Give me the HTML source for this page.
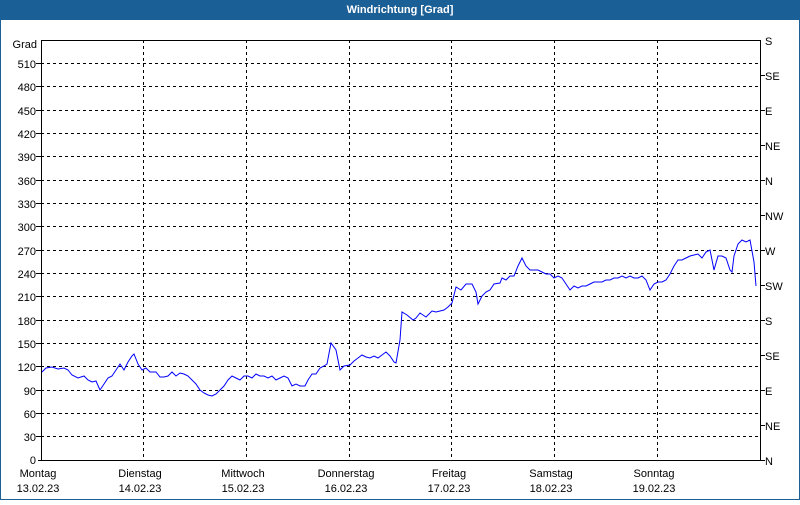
<!DOCTYPE html>
<html><head><meta charset="utf-8"><style>
html,body{margin:0;padding:0;background:#fff}
body{width:800px;height:500px;position:relative;overflow:hidden;font-family:"Liberation Sans",sans-serif;}
</style></head><body>
<svg width="800" height="500" xmlns="http://www.w3.org/2000/svg" font-family="Liberation Sans, sans-serif" font-size="11">
<rect x="0" y="0" width="800" height="500" fill="#fff"/>
<rect x="0" y="0" width="800" height="20" fill="#1b5f97"/>
<rect x="0" y="0" width="1" height="500" fill="#1b5f97"/>
<rect x="799" y="0" width="1" height="500" fill="#1b5f97"/>
<rect x="0" y="499" width="800" height="1" fill="#1b5f97"/>
<text x="400" y="13" fill="#fff" font-weight="bold" text-anchor="middle" font-size="11">Windrichtung [Grad]</text>
<g stroke="#000" stroke-width="1" stroke-dasharray="3,3" shape-rendering="crispEdges">
<line x1="41" x2="760" y1="63.5" y2="63.5"/><line x1="41" x2="760" y1="86.5" y2="86.5"/><line x1="41" x2="760" y1="110.5" y2="110.5"/><line x1="41" x2="760" y1="133.5" y2="133.5"/><line x1="41" x2="760" y1="156.5" y2="156.5"/><line x1="41" x2="760" y1="180.5" y2="180.5"/><line x1="41" x2="760" y1="203.5" y2="203.5"/><line x1="41" x2="760" y1="226.5" y2="226.5"/><line x1="41" x2="760" y1="250.5" y2="250.5"/><line x1="41" x2="760" y1="273.5" y2="273.5"/><line x1="41" x2="760" y1="296.5" y2="296.5"/><line x1="41" x2="760" y1="320.5" y2="320.5"/><line x1="41" x2="760" y1="343.5" y2="343.5"/><line x1="41" x2="760" y1="366.5" y2="366.5"/><line x1="41" x2="760" y1="390.5" y2="390.5"/><line x1="41" x2="760" y1="413.5" y2="413.5"/><line x1="41" x2="760" y1="436.5" y2="436.5"/>
<line x1="143.5" x2="143.5" y1="40" y2="460"/><line x1="246.5" x2="246.5" y1="40" y2="460"/><line x1="349.5" x2="349.5" y1="40" y2="460"/><line x1="451.5" x2="451.5" y1="40" y2="460"/><line x1="554.5" x2="554.5" y1="40" y2="460"/><line x1="657.5" x2="657.5" y1="40" y2="460"/>
</g>
<g stroke="#000" stroke-width="1" shape-rendering="crispEdges" fill="none">
<polyline points="41.5,460 41.5,40.5 760.5,40.5 760.5,460"/>
<line x1="38" x2="760" y1="460.5" y2="460.5"/>
<line x1="36" x2="41" y1="63.5" y2="63.5"/><line x1="36" x2="41" y1="86.5" y2="86.5"/><line x1="36" x2="41" y1="110.5" y2="110.5"/><line x1="36" x2="41" y1="133.5" y2="133.5"/><line x1="36" x2="41" y1="156.5" y2="156.5"/><line x1="36" x2="41" y1="180.5" y2="180.5"/><line x1="36" x2="41" y1="203.5" y2="203.5"/><line x1="36" x2="41" y1="226.5" y2="226.5"/><line x1="36" x2="41" y1="250.5" y2="250.5"/><line x1="36" x2="41" y1="273.5" y2="273.5"/><line x1="36" x2="41" y1="296.5" y2="296.5"/><line x1="36" x2="41" y1="320.5" y2="320.5"/><line x1="36" x2="41" y1="343.5" y2="343.5"/><line x1="36" x2="41" y1="366.5" y2="366.5"/><line x1="36" x2="41" y1="390.5" y2="390.5"/><line x1="36" x2="41" y1="413.5" y2="413.5"/><line x1="36" x2="41" y1="436.5" y2="436.5"/>
<line x1="760" x2="765" y1="75.5" y2="75.5"/><line x1="760" x2="765" y1="110.5" y2="110.5"/><line x1="760" x2="765" y1="145.5" y2="145.5"/><line x1="760" x2="765" y1="180.5" y2="180.5"/><line x1="760" x2="765" y1="215.5" y2="215.5"/><line x1="760" x2="765" y1="250.5" y2="250.5"/><line x1="760" x2="765" y1="285.5" y2="285.5"/><line x1="760" x2="765" y1="320.5" y2="320.5"/><line x1="760" x2="765" y1="355.5" y2="355.5"/><line x1="760" x2="765" y1="390.5" y2="390.5"/><line x1="760" x2="765" y1="425.5" y2="425.5"/><line x1="760" x2="765" y1="460.5" y2="460.5"/>
</g>
<g fill="#000" text-anchor="end">
<text x="37" y="48">Grad</text>
<text x="36" y="68">510</text><text x="36" y="91">480</text><text x="36" y="115">450</text><text x="36" y="138">420</text><text x="36" y="161">390</text><text x="36" y="185">360</text><text x="36" y="208">330</text><text x="36" y="231">300</text><text x="36" y="255">270</text><text x="36" y="278">240</text><text x="36" y="301">210</text><text x="36" y="325">180</text><text x="36" y="348">150</text><text x="36" y="371">120</text><text x="36" y="395">90</text><text x="36" y="418">60</text><text x="36" y="441">30</text><text x="36" y="464">0</text>
</g>
<g fill="#000">
<text x="765" y="45">S</text><text x="765" y="80">SE</text><text x="765" y="115">E</text><text x="765" y="150">NE</text><text x="765" y="185">N</text><text x="765" y="220">NW</text><text x="765" y="255">W</text><text x="765" y="290">SW</text><text x="765" y="325">S</text><text x="765" y="360">SE</text><text x="765" y="395">E</text><text x="765" y="430">NE</text><text x="765" y="465">N</text>
</g>
<g fill="#000" text-anchor="middle">
<text x="38" y="477">Montag</text><text x="38" y="492">13.02.23</text>
<text x="140" y="477">Dienstag</text><text x="140" y="492">14.02.23</text>
<text x="243" y="477">Mittwoch</text><text x="243" y="492">15.02.23</text>
<text x="346" y="477">Donnerstag</text><text x="346" y="492">16.02.23</text>
<text x="449" y="477">Freitag</text><text x="449" y="492">17.02.23</text>
<text x="551" y="477">Samstag</text><text x="551" y="492">18.02.23</text>
<text x="654" y="477">Sonntag</text><text x="654" y="492">19.02.23</text>
</g>
<polyline fill="none" stroke="#0000ff" stroke-width="1" points="42,372 46,368 52,367 58,369 64,368 68,370 72,375 78,378 84,376 88,380 92,382 96,381 100,390 104,384 108,378 112,376 116,370 120,364 124,370 128,362 132,356 134,354 138,364 142,370 146,368 150,372 156,372 160,377 164,377 168,376 172,372 176,376 180,373 184,374 188,376 192,380 196,384 200,390 204,393 208,395 212,396 216,394 220,390 224,386 228,380 232,376 236,378 240,380 244,376 248,376 252,378 256,374 260,376 264,376 268,378 272,376 276,380 280,378 284,376 288,378 292,386 296,384 300,386 305,386 308,380 312,374 316,374 320,368 324,366 327,364 331,343 336,350 338,360 340,370 344,366 350,365 354,361 358,358 362,355 366,357 370,358 374,356 378,358 382,355 386,352 390,356 394,362 396,363 400,340 402,312 407,315 413,320 416,318 420,313 426,317 432,311 436,312 440,311 444,310 448,307 452,303 456,287 461,290 466,284 472,284 476,292 478,304 482,296 486,292 490,290 494,284 500,283 502,278 506,280 510,276 514,276 518,266 522,258 526,266 530,270 534,270 538,270 542,272 546,274 550,274 554,278 558,276 562,278 566,284 570,290 574,286 578,288 582,286 586,286 590,284 594,282 598,282 602,282 606,280 610,280 614,278 618,278 622,276 626,278 630,276 634,278 638,278 642,276 646,280 650,290 654,284 658,282 662,282 666,280 670,274 674,266 678,260 682,260 686,258 690,256 694,255 698,254 702,258 706,252 710,250 714,270 718,256 722,256 726,258 730,270 732,272 734,256 738,244 742,240 746,242 750,240 754,262 756,286"/>
</svg>
</body></html>
